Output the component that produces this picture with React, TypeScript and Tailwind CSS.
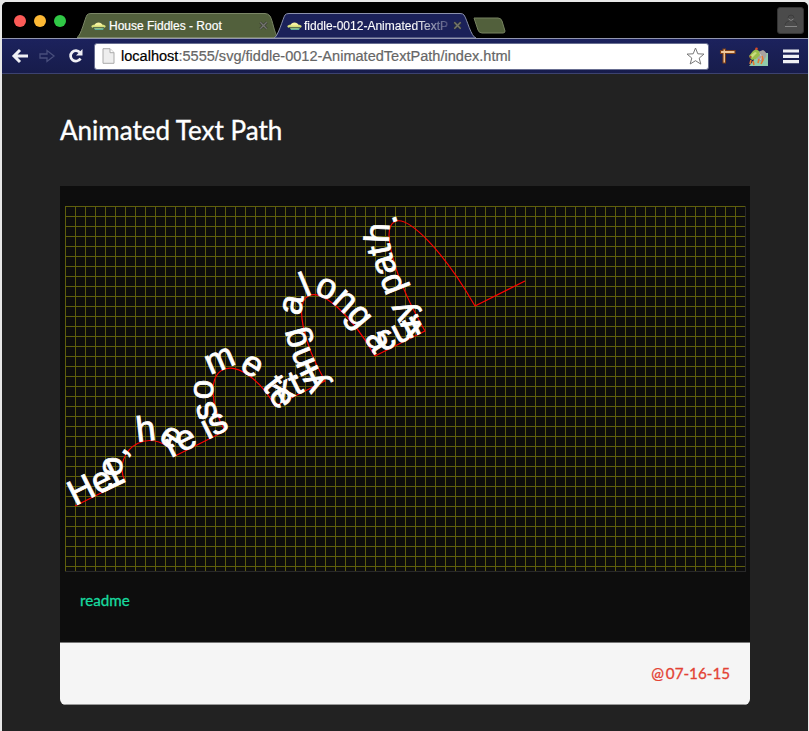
import React from 'react';

const WAVE =
  'M10,300 l50,-25 a25,25 -30 0,1 50,-25 l50,-25 a25,50 -30 0,1 50,-25 l50,-25 a25,75 -30 0,1 50,-25 l50,-25 a25,100 -30 0,1 50,-25 l50,-25';

function Saucer() {
  return (
    <svg width="15" height="10" viewBox="0 0 15 10" className="shrink-0">
      <path d="M3 7h10l-1 2H4z" fill="#5fae9c" />
      <ellipse cx="7.5" cy="5.4" rx="7.2" ry="2.2" fill="#d8e07a" />
      <path d="M3.5 4.5C4 .5 11 .5 11.500 4.500z" fill="#f6f2a0" />
      <path d="M2 6.600h11" stroke="#2d4a40" strokeWidth=".8" />
    </svg>
  );
}

function CloseMark() {
  return (
    <svg width="9" height="9" viewBox="0 0 9 9" className="shrink-0">
      <path d="M1.300 1.300l6.400 6.400M7.700 1.300l-6.400 6.400" stroke="#34382f" strokeWidth="2.600" />
      <path d="M1.300 1.300l6.400 6.400M7.700 1.300l-6.400 6.400" stroke="#74756f" strokeWidth="1.400" />
    </svg>
  );
}

function Tab({ title, active }: { title: string; active?: boolean }) {
  return (
    <div className={active ? 'relative z-10 -ml-[5px] h-[25px] w-[206px]' : 'relative h-[25px] w-[202px]'}>
      <svg className="absolute inset-0" width="206" height="25" viewBox="0 0 206 25">
        {active ? (
          <path d="M0 25C4 24 9 5 11 2Q12 .5 15 .5H186Q189 .5 190 2C193 6 197 24 202 25z" fill="#1b2159" stroke="#8b91ad" />
        ) : (
          <path d="M0 24.500C4 23 8 5 10 2Q11 .5 14 .5H188Q191 .5 193 3C196 8 197 20 201 24.500z" fill="#52603c" stroke="#7b8667" />
        )}
      </svg>
      <div className={active ? 'relative flex h-[25px] items-center gap-[2px] pl-[13px]' : 'relative flex h-[25px] items-center gap-[3px] pl-[14px]'}>
        <Saucer />
        <span
          className={
            active
              ? 'w-[147px] whitespace-nowrap bg-linear-to-r from-white from-75% to-white/10 bg-clip-text text-[12px] text-transparent [-webkit-text-stroke:0.2px_rgba(255,255,255,0.25)]'
              : 'w-[147px] whitespace-nowrap text-[12px] text-white [-webkit-text-stroke:0.2px_white]'
          }
        >
          {title}
        </span>
        <CloseMark />
      </div>
    </div>
  );
}

function Toolbar() {
  return (
    <div className="flex h-[36px] items-center border-t border-b border-t-[#9296b0] border-b-[#3c4270] bg-[#1b2159] bg-linear-to-b from-[#1c225d] to-[#171c4b] pl-[9px]">
      <svg width="76" height="20" viewBox="0 0 76 20" className="shrink-0" fill="none">
        <path d="M17 10H4M9 4l-6 6 6 6" stroke="#f0f0f4" strokeWidth="3" />
        <path d="M29 8h7V4.500l7 5.500-7 5.500V12h-7z" stroke="#484e7c" strokeWidth="1.300" />
        <path d="M69 6.500A5.300 5.300 0 1 0 69.500 12.500" stroke="#f0f0f4" strokeWidth="2.700" />
        <path d="M71.500 3v6.500H65z" fill="#f0f0f4" />
      </svg>
      <div className="ml-[7px] flex h-[27px] w-[615px] shrink-0 items-center rounded-[3px] border border-[#686e91] bg-white pl-[7px] pr-[3px]">
        <svg width="13" height="16" viewBox="0 0 13 16" className="shrink-0">
          <path d="M1 .7h7l4 4v10.600H1z" fill="#eee" stroke="#aaa" />
          <path d="M8 .7v4h4" fill="#fff" stroke="#aaa" />
        </svg>
        <span className="ml-[6px] flex-1 whitespace-nowrap pt-[2px] text-[14.560px] text-[#666] [-webkit-text-stroke:0.2px_#666]">
          <span className="text-black [-webkit-text-stroke:0.2px_black]">localhost</span>:5555/svg/fiddle-0012-AnimatedTextPath/index.html
        </span>
        <svg width="19" height="18" viewBox="0 0 19 18">
          <path d="M9.500 1l2.300 5.800 6.200.3-4.800 4 1.600 6-5.300-3.400L4.200 17l1.600-6L1 7.100l6.200-.3z" fill="#fff" stroke="#777" />
        </svg>
      </div>
      <svg width="17" height="17" viewBox="0 0 17 17" className="ml-[10px] shrink-0">
        <path d="M1.500 2.500h2.500V1h2.500v1.500h9.500V5.500H6.500v9.500H4V5.500H1.500z" fill="#f0c79a" stroke="#7c3e17" strokeWidth="1.100" />
      </svg>
      <svg width="20" height="19" viewBox="0 0 20 19" className="ml-[12px] shrink-0">
        <path d="M1 19l5-6V6h14v13z" fill="#92cbab" />
        <path d="M10 5l5-2q5 3 3 7l-4 5-5-3z" fill="#a9a3a0" />
        <path d="M11 6l3 4-2 3" stroke="#d4d0c8" fill="none" />
        <path d="M1 9l4-5 3-2 3 2 1 4-4 4-4 1-2-2z" fill="#99bd4a" />
        <path d="M3 8l4-3 2 1-5 5z" fill="#cbdc7e" />
        <path d="M3 13l-1 4M5 14l1 4M14 9l1 4-2 4M11 12l-1 4" stroke="#e77931" strokeWidth="1.600" fill="none" />
        <circle cx="8.500" cy="1.800" r="1.300" fill="#dc4828" />
        <circle cx="2.500" cy="10" r="1" fill="#b8452a" />
      </svg>
      <svg width="16" height="15" viewBox="0 0 16 15" className="ml-[15px] shrink-0">
        <path d="M0 2h16M0 7.300h16M0 12.600h16" stroke="#eff0f4" strokeWidth="3.200" />
      </svg>
    </div>
  );
}

function TextPathDrawing() {
  return (
    <svg width="681" height="366" viewBox="0 0 681 366" className="block overflow-visible">
      <defs>
        <pattern id="grid" width="10" height="10" patternUnits="userSpaceOnUse">
          <path d="M0 .5H10M.5 0V10" stroke="#5f5f0c" fill="none" />
        </pattern>
        <path id="wave" d={WAVE} />
      </defs>
      <rect width="680" height="365" fill="url(#grid)" />
      <path d="M0 365.500H681M680.500 0V366" stroke="#292929" />
      <path d={WAVE} fill="none" stroke="#ff0000" strokeWidth="1.150" />
      <text fill="#fff" stroke="#fff" strokeWidth=".8" fontSize="35.15" fontFamily="'Liberation Sans', Arial, sans-serif">
        <textPath href="#wave">Hello, here is some text lying along a curvy path.</textPath>
      </text>
    </svg>
  );
}

export default function App() {
  return (
    <div className="h-[731px] w-[809px] overflow-hidden bg-[#e8e8e8] pl-[2px] pt-[2px] font-['Liberation_Sans',Arial,sans-serif]">
      <div className="flex h-[729px] w-[806px] flex-col overflow-hidden rounded-t-[5px] bg-[#222]">
        <header className="flex h-[36px] shrink-0 items-end bg-black">
          <div className="flex gap-[8px] self-center pl-[12px] pt-[2px]">
            <i className="size-[12px] rounded-full bg-[#fc5b57]" />
            <i className="size-[12px] rounded-full bg-[#fdb935]" />
            <i className="size-[12px] rounded-full bg-[#30c846]" />
          </div>
          <div className="ml-[11px] flex">
            <Tab title="House Fiddles - Root" />
            <Tab title="fiddle-0012-AnimatedTextP" active />
          </div>
          <svg width="33" height="18" viewBox="0 0 33 18" className="mb-[3px] -ml-[7px]">
            <path d="M1 1h24q3 0 4 3l3 10q0 2-2 2H9q-3 0-4-3z" fill="#52603c" stroke="#768260" />
          </svg>
          <div className="mr-[4px] mb-[4px] ml-auto flex size-[27px] items-center justify-center rounded-[3px] border border-[#333] bg-[#4b4b4b]">
            <svg width="14" height="14" viewBox="0 0 14 14" fill="none">
              <path d="M4 4a3 3 0 0 1 6 0M1 11q0-3 4-4M13 11q0-3-4-4" stroke="#3c3c3c" />
              <path d="M1 12.500h12M4.500 5q2.500 3 5 0" stroke="#858585" />
            </svg>
          </div>
        </header>
        <Toolbar />
        <main className="px-[58px] font-['Lato',sans-serif]">
          <h1 className="h-[112px] pt-[36px] text-[26px] leading-[40px] text-white [-webkit-text-stroke:0.35px_white]">Animated Text Path</h1>
          <section className="w-[690px] overflow-hidden rounded-b-[6px]">
            <div className="h-[456px] bg-[#0d0d0d] px-[5px] pt-[20px]">
              <TextPathDrawing />
              <a className="block pt-[16px] pl-[15px] text-[15.200px] leading-[24px] text-[#18d99f] [-webkit-text-stroke:0.3px_#18d99f]">readme</a>
            </div>
            <footer className="flex h-[63px] items-center justify-end border-t border-b border-t-[#777] border-b-[#999] bg-[#f5f5f5] pr-[20px] text-[15.200px] text-[#e34234] [-webkit-text-stroke:0.3px_#e34234] [word-spacing:-2px]">
              @ 07-16-15
            </footer>
          </section>
        </main>
      </div>
    </div>
  );
}
